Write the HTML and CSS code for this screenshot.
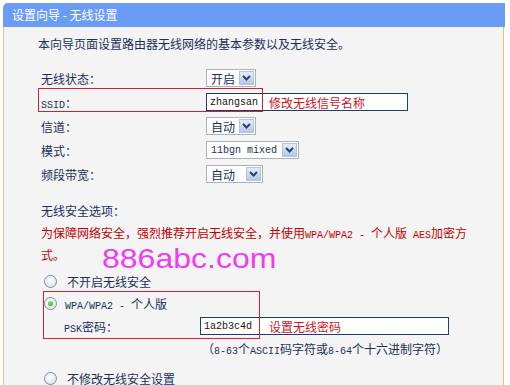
FILE: index.html
```html
<!DOCTYPE html>
<html lang="zh-CN">
<head>
    <meta charset="UTF-8">
    <meta name="viewport" content="width=device-width, initial-scale=1.0">
    <title>设置向导 - 无线设置</title>
    <link rel="stylesheet" href="styles.css">
</head>
<body>

    <div class="painel">
        <div class="titulo">设置向导 - 无线设置</div>

        <div class="conteudo">
            <p class="intro">本向导页面设置路由器无线网络的基本参数以及无线安全。</p>

            <div class="linhas">
                <span class="rotulo">无线状态：</span>
                <div class="select w50"><span>开启</span><i class="seta"><svg width="15" height="14" viewBox="0 0 15 14"><polyline points="4,5 7.5,8.5 11,5" fill="none" stroke="#2b416e" stroke-width="2"/></svg></i></div>

                <span class="rotulo"><span class="en">SSID</span>：</span>
                <div class="campo w202"><span class="valor en v62">zhangsan</span><span class="nota">修改无线信号名称</span></div>

                <span class="rotulo">信道：</span>
                <div class="select w50"><span>自动</span><i class="seta"><svg width="15" height="14" viewBox="0 0 15 14"><polyline points="4,5 7.5,8.5 11,5" fill="none" stroke="#2b416e" stroke-width="2"/></svg></i></div>

                <span class="rotulo">模式：</span>
                <div class="select w93"><span class="en">11bgn mixed</span><i class="seta"><svg width="15" height="14" viewBox="0 0 15 14"><polyline points="4,5 7.5,8.5 11,5" fill="none" stroke="#2b416e" stroke-width="2"/></svg></i></div>

                <span class="rotulo">频段带宽：</span>
                <div class="select w57"><span>自动</span><i class="seta"><svg width="15" height="14" viewBox="0 0 15 14"><polyline points="4,5 7.5,8.5 11,5" fill="none" stroke="#2b416e" stroke-width="2"/></svg></i></div>
            </div>

            <p class="secao">无线安全选项：</p>
            <p class="aviso">为保障网络安全，强烈推荐开启无线安全，并使用<span class="en">WPA/WPA2 - </span>个人版<span class="en"> AES</span>加密方式。</p>

            <div class="opcao op1"><span class="radio"></span>不开启无线安全</div>
            <div class="opcao op2"><span class="radio marcado"></span><span><span class="en">WPA/WPA2 - </span>个人版</span></div>
            <div class="psk">
                <span class="rotulo-psk"><span class="en">PSK</span>密码：</span>
                <div class="campo w249"><span class="valor en v68">1a2b3c4d</span><span class="nota">设置无线密码</span></div>
            </div>
            <p class="dica">（<span class="en">8-63</span>个<span class="en">ASCII</span>码字符或<span class="en">8-64</span>个十六进制字符）</p>
            <div class="opcao op3"><span class="radio"></span>不修改无线安全设置</div>

            <!-- marcações por cima da tela -->
            <div class="marca marca-ssid"></div>
            <div class="marca marca-wpa"></div>
            <div class="marca-dagua">886abc.com</div>
        </div>
    </div>

</body>
</html>
```

FILE: styles.css
```css
* {
    box-sizing: border-box;
}
body {
    margin: 0;
    padding: 3px 0 0 3px;
    background-color: #fff;
    font-family: "Noto Sans CJK SC", sans-serif;
    font-size: 12px;
    color: #1b2f5c;
    overflow: hidden;
}
p {
    margin: 0;
}
.en {
    font-family: "Liberation Mono", "Noto Sans CJK SC", monospace;
    font-size: 10px;
}
.painel {
    width: 502px;
}
.titulo {
    height: 24px;
    line-height: 24px;
    padding-left: 9px;
    background-color: #6b9cf5;
    color: #fff;
    border-top-left-radius: 5px;
}
.conteudo {
    position: relative;
    height: 360px;
    background-color: #f4f4f4;
    border-left: 1px solid #e9bf7a;
    border-right: 1px solid #e9bf7a;
    margin-right: 1px;
}
.intro {
    padding: 7px 0 0 34px;
    line-height: 20px;
}

/* linhas do formulario */
.linhas {
    display: grid;
    grid-template-columns: 165px auto;
    grid-auto-rows: 24px;
    align-items: center;
    justify-items: start;
    margin-top: 12px;
    padding-left: 37px;
}
.select {
    display: flex;
    align-items: center;
    justify-content: space-between;
    height: 18px;
    padding-left: 4px;
    background-color: #fff;
    border: 1px solid #aab2bc;
}
.seta {
    display: block;
    width: 15px;
    height: 14px;
    margin-right: 1px;
    background: linear-gradient(#e4ecf7, #b4c8e5);
    border: 1px solid #b4c3d8;
}
.seta svg {
    display: block;
    margin: -1px;
}
.w50 { width: 50px; }
.w57 { width: 57px; }
.w93 { width: 93px; }
.w202 { width: 202px; }
.w249 { width: 249px; }

.campo {
    display: flex;
    align-items: center;
    height: 18px;
    background-color: #fff;
    border: 1px solid #1f3d6c;
}
.valor {
    padding-left: 3px;
    color: #111;
}
.v62 { width: 62px; }
.v68 { width: 68px; }
.nota {
    color: #c8141e;
    font-size: 12px;
}

/* seguranca */
.secao {
    margin-top: 15px;
    padding-left: 37px;
    line-height: 20px;
}
.aviso {
    margin-top: 2px;
    padding-left: 37px;
    width: 467px;
    line-height: 19px;
    color: #c00000;
}
.opcao {
    display: flex;
    align-items: center;
    gap: 10px;
    height: 20px;
    padding-left: 40px;
}
.op1 { margin-top: 7px; }
.op2 { margin-top: 2px; gap: 8px; }
.op3 { margin-top: 6px; }
.radio {
    width: 13px;
    height: 13px;
    border-radius: 50%;
    border: 1px solid #7d8c9e;
    background: radial-gradient(circle at 40% 35%, #fff, #d9e0e8);
    position: relative;
}
.marcado::after {
    content: "";
    position: absolute;
    left: 3px;
    top: 3px;
    width: 5px;
    height: 5px;
    border-radius: 50%;
    background: radial-gradient(circle at 40% 35%, #8ee07a, #2c9a2c);
}
.psk {
    display: flex;
    align-items: center;
    height: 20px;
    margin-top: 3px;
    padding-left: 60px;
}
.rotulo-psk {
    width: 136px;
}
.dica {
    margin-top: 3px;
    padding-left: 198px;
    line-height: 20px;
}

/* marcacoes vermelhas e marca d'agua */
.marca {
    position: absolute;
    border: 1px solid #cc2233;
}
.marca-ssid {
    left: 34px;
    top: 61px;
    width: 225px;
    height: 24px;
}
.marca-wpa {
    left: 39px;
    top: 264px;
    width: 217px;
    height: 48px;
}
.marca-dagua {
    position: absolute;
    left: 98px;
    top: 219px;
    font-family: "Liberation Sans", sans-serif;
    font-size: 32px;
    line-height: 22px;
    color: #f03cf0;
    transform: scaleY(0.85);
    transform-origin: bottom left;
}
```
